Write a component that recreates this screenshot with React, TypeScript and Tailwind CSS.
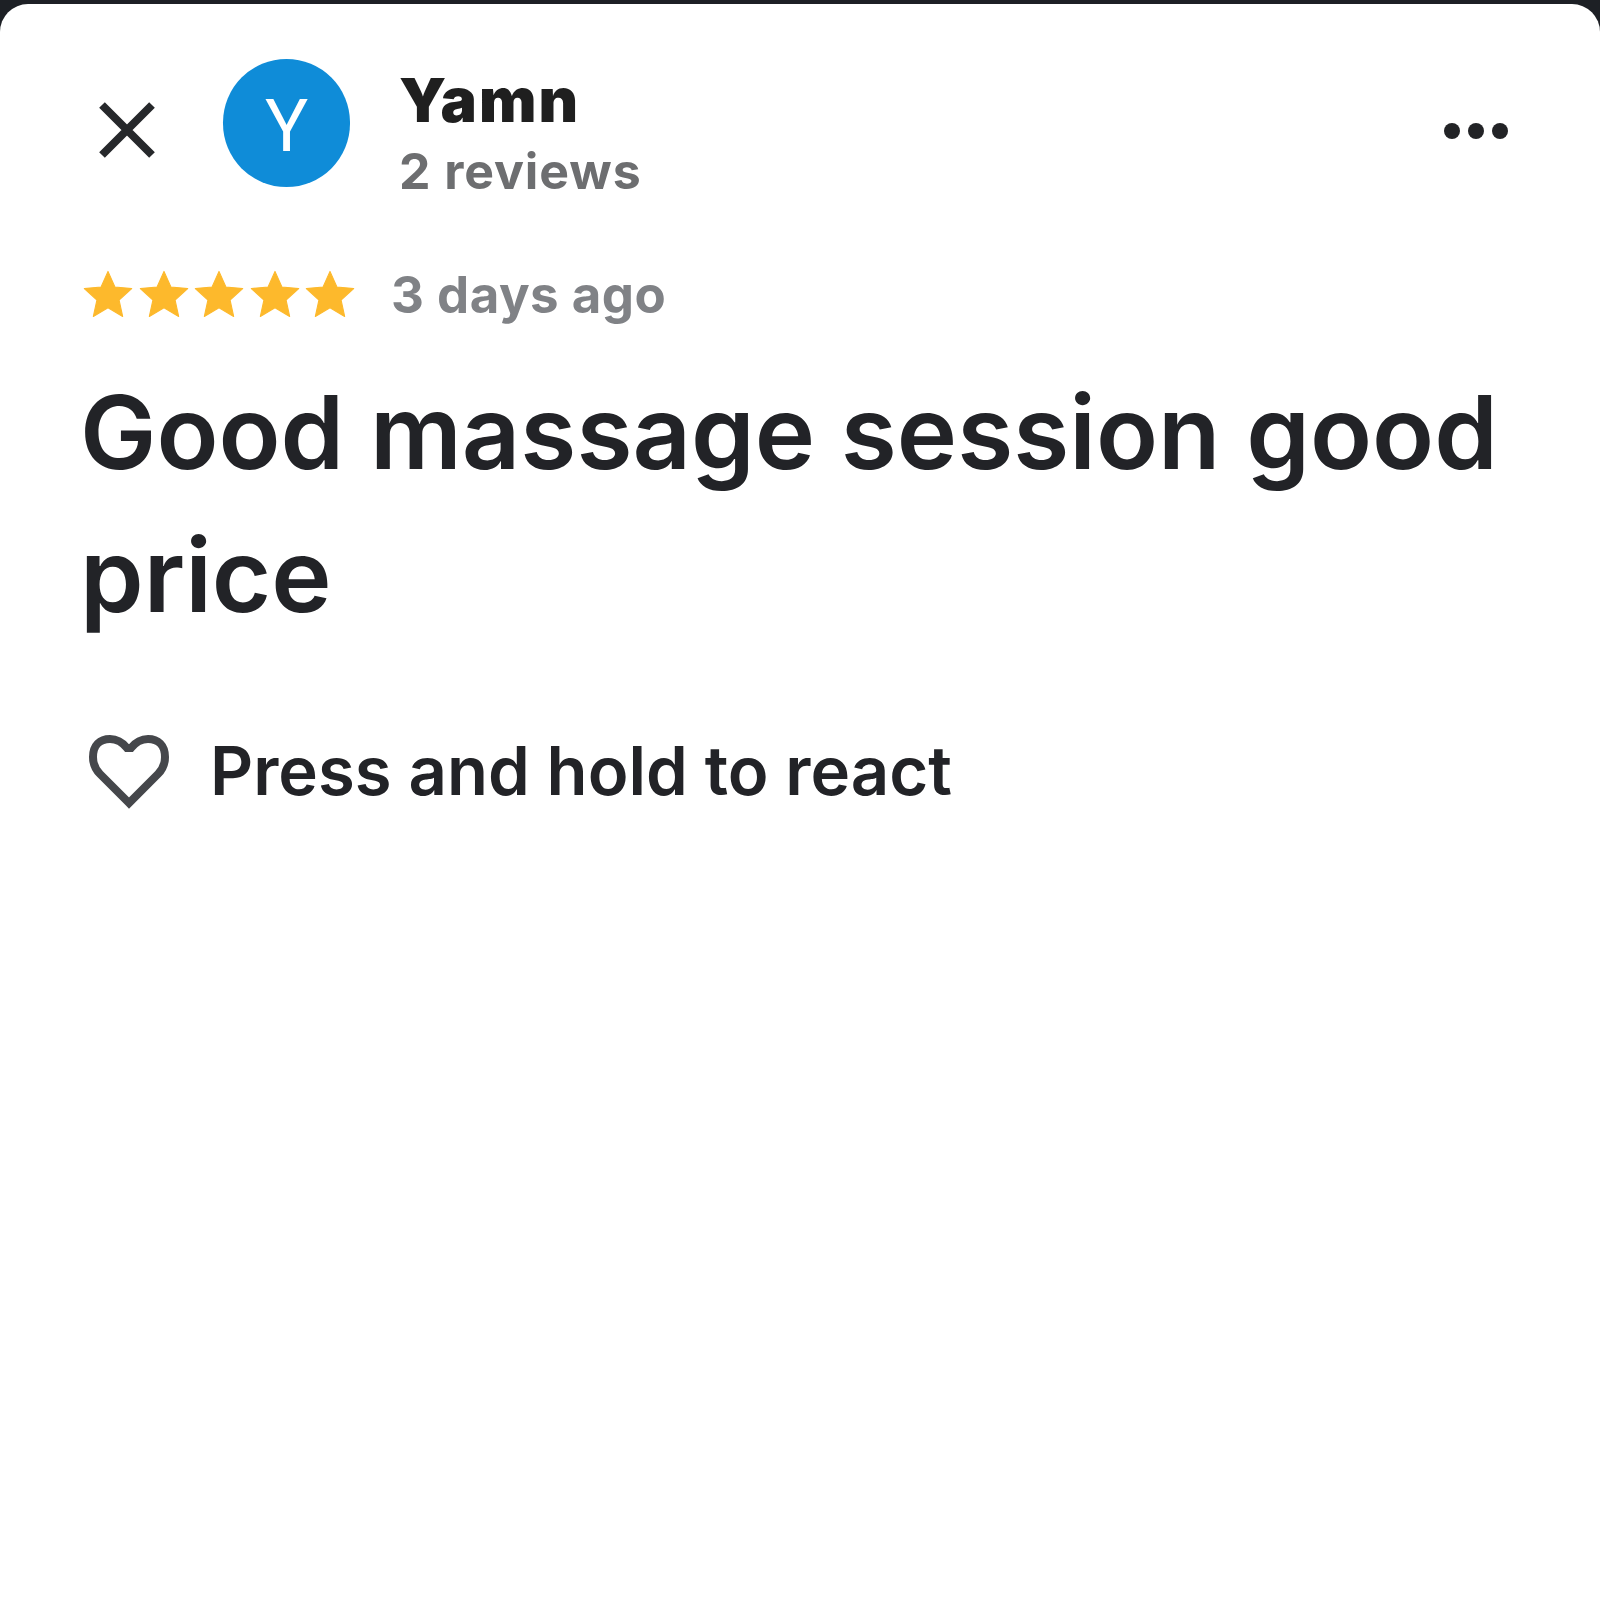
import React from "react";

const STAR = "M12 1.1L15.2 8.3L22.94 9.05L17.1 14.3L18.76 21.9L12 17.9L5.24 21.9L6.9 14.3L1.06 9.05L8.8 8.3Z";

function Star() {
  return (
    <svg width="52" height="52" viewBox="0 0 24 24" className="shrink-0">
      <path d={STAR} fill="#fdb92c" stroke="#fdb92c" strokeWidth="0.5" strokeLinejoin="round" />
    </svg>
  );
}

export default function App() {
  return (
    <div className="w-[1600px] h-[1600px] bg-[#1d2025] pt-[4px] overflow-hidden font-['Inter',sans-serif]">
      <div className="h-[1596px] bg-white rounded-t-[28px] pl-[83px] pr-[92px]">
        <div className="flex items-start pt-[55px]">
          <svg width="60" height="60" viewBox="0 0 60 60" className="ml-[14px] mt-[41px] shrink-0">
            <path d="M5 5L55 55M55 5L5 55" stroke="#26282b" strokeWidth="8" fill="none" />
          </svg>
          <div className="ml-[66px] w-[127px] h-[128px] rounded-full bg-[#0f8cd8] flex items-center justify-center shrink-0 pt-[7px]">
            <span className="text-white text-[72px] leading-none font-['Roboto',sans-serif]">Y</span>
          </div>
          <div className="ml-[49px] flex flex-col">
            <div className="text-[61px] leading-[82px] font-black tracking-[2px] text-[#1f1f1f]">Yamn</div>
            <div className="text-[50px] leading-[60px] font-bold tracking-[0.9px] text-[#6d6e70]">2 reviews</div>
          </div>
          <div className="ml-auto mt-[64px] flex gap-[8px]">
            <span className="w-[16px] h-[16px] rounded-full bg-[#222326]" />
            <span className="w-[16px] h-[16px] rounded-full bg-[#222326]" />
            <span className="w-[16px] h-[16px] rounded-full bg-[#222326]" />
          </div>
        </div>
        <div className="flex items-start mt-[60px]">
          <div className="flex gap-[3.5px] mt-[8px] -ml-[1px]">
            <Star /><Star /><Star /><Star /><Star />
          </div>
          <span className="ml-[35px] pt-[4px] text-[51px] leading-[60px] font-bold tracking-[0.5px] text-[#808286]">3 days ago</span>
        </div>
        <h1 className="mt-[36px] -ml-[3px] text-[102px] leading-[143px] font-semibold text-[#222327]">
          Good massage session good price
        </h1>
        <div className="flex items-center mt-[86px]">
          <svg width="84" height="78" viewBox="0 0 84 78" className="ml-[4px] shrink-0">
            <path
              d="M42 70L13 41C8 36 6 30 6 24C6 12 13 6 23 6C31 6 36 10 40 15L44 15C48 10 53 6 61 6C71 6 78 12 78 24C78 30 76 36 71 41Z"
              fill="none"
              stroke="#45474b"
              strokeWidth="8"
              strokeLinejoin="miter"
            />
          </svg>
          <span className="ml-[39px] -mt-[2px] text-[67px] leading-[80px] font-semibold text-[#222327]">Press and hold to react</span>
        </div>
      </div>
    </div>
  );
}
